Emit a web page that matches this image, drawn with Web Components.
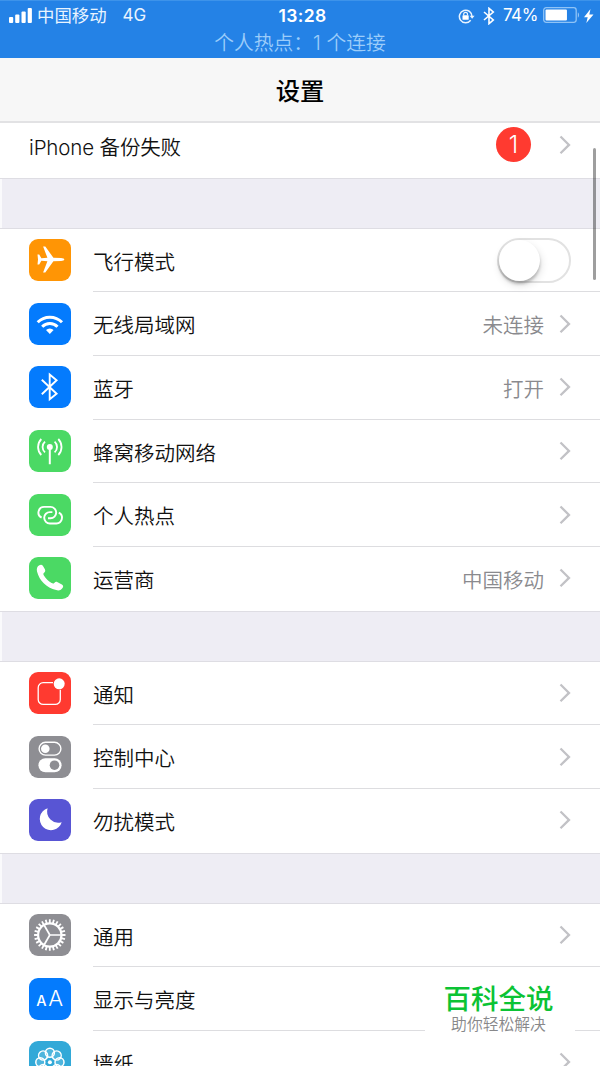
<!DOCTYPE html>
<html lang="zh-CN">
<head>
<meta charset="utf-8">
<title>设置</title>
<style>
    html, body {
        margin: 0;
        height: 1066px;
        overflow: hidden;
    }

    body {
        font-family: Inter, "Noto Sans CJK SC", sans-serif;
        color: #111;
        background: #fff;
    }
</style>
</head>
<body>
<settings-screen>
    <status-bar slot="top" carrier="中国移动" network="4G" time="13:28" battery="74">个人热点：1 个连接</status-bar>
    <nav-title slot="top">设置</nav-title>

    <settings-group>
        <settings-row badge="1">iPhone 备份失败</settings-row>
    </settings-group>
    <settings-group>
        <settings-row icon="plane" color="#ff9505" toggle>飞行模式</settings-row>
        <settings-row icon="wifi" color="#047bfd" value="未连接">无线局域网</settings-row>
        <settings-row icon="bluetooth" color="#047bfd" value="打开">蓝牙</settings-row>
        <settings-row icon="antenna" color="#4bd964">蜂窝移动网络</settings-row>
        <settings-row icon="hotspot" color="#4bd964">个人热点</settings-row>
        <settings-row icon="phone" color="#4bd964" value="中国移动">运营商</settings-row>
    </settings-group>
    <settings-group>
        <settings-row icon="notify" color="#ff3a30">通知</settings-row>
        <settings-row icon="control" color="#8e8e93">控制中心</settings-row>
        <settings-row icon="moon" color="#5855d4">勿扰模式</settings-row>
    </settings-group>
    <settings-group>
        <settings-row icon="gear" color="#8e8e93">通用</settings-row>
        <settings-row icon="text" color="#047bfd">显示与亮度</settings-row>
        <settings-row icon="flower" color="#32a9d8">墙纸</settings-row>
    </settings-group>

    <site-mark slot="over" name="百科全说">助你轻松解决</site-mark>
</settings-screen>

<script>
// repeats a shape around the middle of an icon
const around = (n, cx, cy, shape, start = 0) =>
    Array.from ({length: n}, (_, i) => `<g transform="rotate(${start + i * 360 / n} ${cx} ${cy})">${shape}</g>`).join ("");

// every icon is drawn in a 42 x 42 box
const icons = {
    plane: `<path fill="#fff" d="M35.300 20.500c0 .9-1.300 1.300-3.300 1.400l-7.600.4L16.300 33.500h-2.200l4.300-11.300-6-.4L10.200 25.500H8.500l.5-5-.5-5h1.700l2.200 3.700 6-.4L14.100 7.500h2.200l8.100 11.200 7.600.4c2 .1 3.300.5 3.300 1.400z"/>`,
    wifi: `<g fill="none" stroke="#fff" stroke-width="3"><path d="M8.700 19.300a17 17 0 0 1 24.300 0"/><path d="M13.200 23.700a10.800 10.800 0 0 1 15.300 0"/></g><path fill="#fff" d="M17 27a5.500 5.500 0 0 1 7.600 0l-3.800 4.100z"/>`,
    bluetooth: `<path fill="none" stroke="#fff" stroke-width="1.900" d="M12.800 13.800l14.800 14L20.700 33.300V8.500l6.900 5.800-14.800 13.900"/>`,
    antenna: `<circle cx="20.800" cy="17" r="3" fill="#fff"/><g fill="none" stroke="#fff" stroke-width="1.800"><path stroke-width="2" d="M20.800 17v17.300"/><path d="M16 11.600a7.200 7.200 0 0 0 0 10.800M25.600 11.600a7.200 7.200 0 0 1 0 10.800M12.300 9a11.500 11.500 0 0 0 0 16M29.300 9a11.500 11.500 0 0 1 0 16"/></g>`,
    hotspot: `<g fill="none" stroke="#fff" stroke-width="1.900"><path d="M12.600 23.700A5.700 5.700 0 0 1 15 12.900H21.500a5.700 5.700 0 0 1 0 11.400H19"/><path d="M29.800 18.700A5.700 5.700 0 0 1 27.400 29.500H20.900a5.700 5.700 0 0 1 0-11.400H23.400"/></g>`,
    phone: `<path fill="#fff" d="M10.300 8.300c1.500-1 2.800-.6 3.700.8l1.900 3.200c.7 1.400.3 2.500-.8 3.400-1 .8-.8 1.700-.2 2.700 2 3 4.400 5.500 7.700 7.600 1 .6 1.900.8 2.700-.1.900-1 2-1.400 3.300-.7l4.300 2.400c1.400.8 1.600 2 .8 3.200-1.300 2.200-3.600 3.100-6.500 2.300C17.300 30.500 10.400 23.600 8 14.500c-.6-2.900.1-4.900 2.300-6.200z"/>`,
    notify: `<path fill="none" stroke="#fff" stroke-width="1.300" d="M24 10.700H14.200a5 5 0 0 0-5 5v11.700a5 5 0 0 0 5 5h12.100a5 5 0 0 0 5-5V17.800"/><circle cx="30.200" cy="11.800" r="5.500" fill="#fff"/>`,
    control: `<rect x="10.100" y="6.300" width="21.800" height="12.800" rx="6.400" fill="none" stroke="#fff" stroke-width="1.400"/><circle cx="16.300" cy="12.700" r="4.300" fill="#fff"/><rect x="9.400" y="22.200" width="23.200" height="14" rx="7" fill="#fff"/><circle cx="25.500" cy="29.200" r="4.800" fill="#8e8e93"/>`,
    moon: `<path fill="#fff" d="M18.600 9.300A11.200 11.200 0 1 0 32.700 23.200 11.200 11.200 0 0 1 18.600 9.300z"/>`,
    gear: `<g fill="none" stroke="#fff"><circle cx="20.800" cy="21" r="11.700" stroke-width="2.200"/><g stroke-width="1.800">${around (24, 20.8, 21, '<path d="M20.800 5.300v4"/>')}</g><g stroke-width="1.700">${around (3, 20.8, 21, '<path d="M20.800 21h11.500"/>')}</g></g>`,
    text: `<g fill="#fff" font-family="Inter, sans-serif" text-anchor="middle"><text x="12.400" y="28" font-size="14.500" font-weight="500">A</text><text x="26.700" y="28" font-size="22">A</text></g>`,
    flower: `<g fill="#fff" fill-opacity=".14" stroke="#fff" stroke-width="1.500">${around (8, 20.9, 21.3, '<circle cx="20.900" cy="11.700" r="4.500"/>')}</g><circle cx="20.900" cy="21.300" r="2" fill="#fff"/>`
};

class SettingsScreen extends HTMLElement {
    constructor () {
        super ();
        this.attachShadow ({mode: "open"}).innerHTML = `
<style>
    :host {
        display: flex;
        flex-direction: column;
        position: relative;
        width: 600px;
        height: 1066px;
        overflow: hidden;
    }

    header {
        position: relative;
        z-index: 1;
    }

    /* the list is scrolled, its first row goes under the title */
    main {
        display: flex;
        flex-direction: column;
        gap: 51px;
        margin-top: -8.900px;
        background: linear-gradient(to right, #fafafc 2px, #eeedf4 2px);
    }

    .scroll {
        position: absolute;
        z-index: 2;
        top: 148px;
        right: 4px;
        width: 3px;
        height: 132px;
        border-radius: 2px;
        background: rgba(0, 0, 0, .38);
    }
</style>
<header><slot name="top"></slot></header>
<main><slot></slot></main>
<div class="scroll"></div>
<slot name="over"></slot>
`;
    }
}

class StatusBar extends HTMLElement {
    connectedCallback () {
        const get = name => this.getAttribute (name);
        this.attachShadow ({mode: "open"}).innerHTML = `
<style>
    :host {
        display: block;
        height: 58px;
        box-sizing: border-box;
        background: #2482e6;
        border-top: 1px solid #3d93ea;
        color: #fff;
    }

    .line {
        display: grid;
        grid-template-columns: 1fr auto 1fr;
        align-items: center;
        height: 29px;
        padding: 0 6px 0 9px;
        font-size: 17px;
        line-height: 29px;
    }

    .left, .right {
        display: flex;
        align-items: center;
        white-space: nowrap;
    }

    .right {
        justify-content: flex-end;
    }

    .carrier {
        margin: 0 16px 0 5px;
        font-size: 17.400px;
        color: #e9f4ff;
    }

    .net {
        color: #e9f4ff;
    }

    .time {
        font-weight: 600;
        font-size: 17.500px;
        letter-spacing: .4px;
        margin-left: 2px;
    }

    .percent {
        margin: 0 5px 0 8px;
        letter-spacing: -.4px;
    }

    .note {
        text-align: center;
        font-size: 19.800px;
        font-weight: 350;
        line-height: 26px;
        color: #9ccdfa;
    }
</style>
<div class="line">
    <div class="left">
        <svg width="23" height="15" fill="#fff"><rect y="9" width="4.200" height="6" rx="1"/><rect x="6.200" y="6.500" width="4.200" height="8.500" rx="1"/><rect x="12.500" y="3.500" width="4.200" height="11.500" rx="1"/><rect x="18.700" width="4.200" height="15" rx="1"/></svg>
        <span class="carrier">${get ("carrier")}</span>
        <span class="net">${get ("network")}</span>
    </div>
    <span class="time">${get ("time")}</span>
    <div class="right">
        <svg width="18" height="16" fill="none" stroke="#e9f4ff" stroke-width="1.500"><path d="M12.700 12.300a6.300 6.300 0 1 1 1.300-3.800"/><path d="M11.600 7.700h5l-2.500 3.100z" fill="#e9f4ff" stroke="none"/><rect x="4.500" y="7.300" width="6.200" height="4.500" rx=".6" fill="#fff" stroke="none"/><path stroke-width="1.200" d="M5.700 7.600V6.200a1.900 1.900 0 0 1 3.800 0v1.400"/></svg>
        <svg width="12" height="18" style="margin-left: 7px" fill="none" stroke="#fff" stroke-width="1.600"><path d="M1 5l9.300 8L6 16.700V1.300L10.300 5 1 13"/></svg>
        <span class="percent">${get ("battery")}%</span>
        <svg width="37" height="16" style="margin-top: -1px"><rect x=".7" y=".7" width="32.500" height="14.600" rx="2.500" fill="none" stroke="#8fc3f6" stroke-width="1.300"/><rect x="2.500" y="2.500" width="${get ("battery") * .29}" height="11" rx="1" fill="#fff"/><path d="M34.800 5.500c1.700.5 1.700 4.500 0 5z" fill="#8fc3f6"/></svg>
        <svg width="10" height="14" style="margin-left: 4px" fill="#fff"><path d="M6.500 0L0 8.200h3.700L2.300 14 9.500 5.500H5.300z"/></svg>
    </div>
</div>
<div class="note"><slot></slot></div>
`;
    }
}

class NavTitle extends HTMLElement {
    constructor () {
        super ();
        this.attachShadow ({mode: "open"}).innerHTML = `
<style>
    :host {
        display: block;
        height: 65px;
        box-sizing: border-box;
        border-bottom: 2px solid #e2e2e4;
        background: #f7f7f7;
        color: #000;
        font-size: 24.300px;
        font-weight: 500;
        line-height: 67px;
        text-align: center;
    }
</style>
<slot></slot>
`;
    }
}

class SettingsGroup extends HTMLElement {
    constructor () {
        super ();
        this.attachShadow ({mode: "open"}).innerHTML = `
<style>
    :host {
        display: block;
        background: #fff;
        box-shadow: 0 -1px #dedde3, 0 1px #dedde3;
    }

    ::slotted(:last-child) {
        --line: transparent;
    }
</style>
<slot></slot>
`;
    }
}

class SettingsRow extends HTMLElement {
    connectedCallback () {
        const icon = this.getAttribute ("icon");
        const value = this.getAttribute ("value");
        const badge = this.getAttribute ("badge");
        let end = `<svg class="chevron" width="12" height="20"><path d="M1.500 1.500l8.500 8.400-8.500 8.400" fill="none" stroke="#c2c2c6" stroke-width="2.300"/></svg>`;
        if (this.hasAttribute ("toggle")) {
            end = `<toggle-switch></toggle-switch>`;
        }
        this.attachShadow ({mode: "open"}).innerHTML = `
<style>
    :host {
        display: flex;
        align-items: stretch;
        height: 63.670px;
        padding-left: 29px;
        font-size: 20.500px;
        font-weight: 350;
    }

    .icon {
        align-self: center;
        flex: none;
        width: 42px;
        height: 42px;
        margin: -1px 22px 0 0;
        border-radius: 9px;
        background: ${this.getAttribute ("color")};
    }

    .body {
        display: flex;
        flex: 1;
        align-items: center;
        box-sizing: border-box;
        padding: 1px 29px 1px 0;
        border-bottom: 1px solid var(--line, #dddde0);
    }

    .label {
        flex: 1;
        padding-top: 1px;
        letter-spacing: ${icon ? 0 : "-.150px"};
    }

    .value {
        padding-top: 1px;
        margin-right: 15px;
        color: #8a8a8e;
    }

    .badge {
        width: 35px;
        height: 35px;
        margin: -1px 28px 0 0;
        border-radius: 50%;
        background: #ff3a30;
        color: #fff;
        font-size: 24px;
        line-height: 36px;
        text-align: center;
    }
</style>
${icon ? `<svg class="icon" viewBox="0 0 42 42">${icons[icon]}</svg>` : ""}
<div class="body">
    <span class="label"><slot></slot></span>
    ${value ? `<span class="value">${value}</span>` : ""}
    ${badge ? `<span class="badge">${badge}</span>` : ""}
    ${end}
</div>
`;
    }
}

class ToggleSwitch extends HTMLElement {
    constructor () {
        super ();
        this.attachShadow ({mode: "open"}).innerHTML = `
<style>
    :host {
        display: flex;
        box-sizing: border-box;
        width: 74px;
        height: 45px;
        border: 2px solid #e2e2e2;
        border-radius: 23px;
        background: #fff;
    }

    span {
        width: 41px;
        height: 41px;
        border-radius: 50%;
        background: #fff;
        box-shadow: 0 3px 3px rgba(0, 0, 0, .22), 1px 4px 9px rgba(0, 0, 0, .13);
    }
</style>
<span></span>
`;
    }
}

class SiteMark extends HTMLElement {
    connectedCallback () {
        this.attachShadow ({mode: "open"}).innerHTML = `
<style>
    :host {
        position: absolute;
        z-index: 3;
        left: 425px;
        top: 976px;
        width: 150px;
        height: 66px;
        box-sizing: border-box;
        padding-right: 3px;
        background: #fff;
        text-align: center;
    }

    b {
        display: block;
        color: #0bc334;
        font-size: 27.500px;
        font-weight: 500;
        line-height: 46px;
    }

    small {
        display: block;
        color: #88888a;
        font-size: 15.800px;
        font-weight: 350;
        line-height: 6px;
    }
</style>
<b>${this.getAttribute ("name")}</b>
<small><slot></slot></small>
`;
    }
}

customElements.define ("settings-screen", SettingsScreen);
customElements.define ("status-bar", StatusBar);
customElements.define ("nav-title", NavTitle);
customElements.define ("settings-group", SettingsGroup);
customElements.define ("toggle-switch", ToggleSwitch);
customElements.define ("settings-row", SettingsRow);
customElements.define ("site-mark", SiteMark);
</script>
</body>
</html>
